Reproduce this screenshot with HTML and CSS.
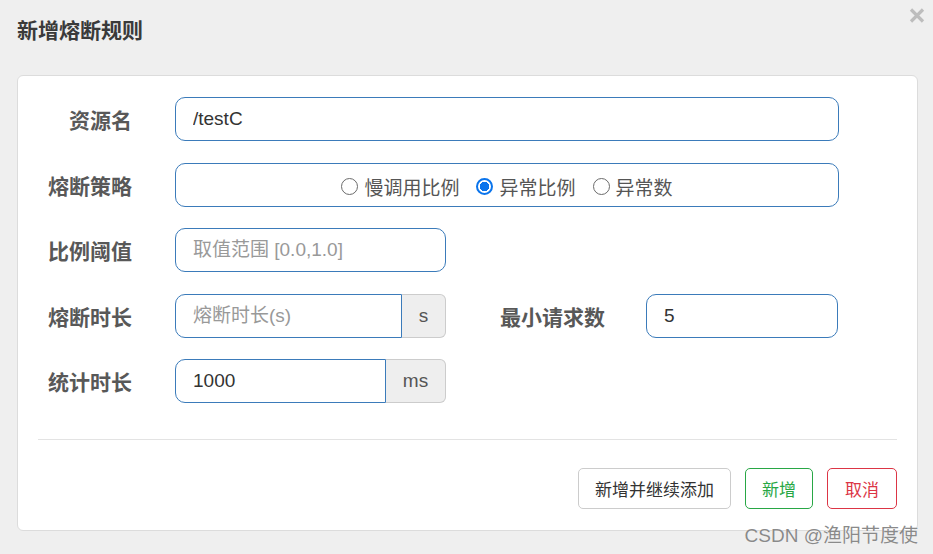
FILE: index.html
```html
<!DOCTYPE html>
<html lang="zh-CN">
<head>
    <meta charset="UTF-8">
    <meta name="viewport" content="width=device-width, initial-scale=1.0">
    <title>新增熔断规则</title>
    <link rel="stylesheet" href="styles.css">
</head>
<body>
    <div class="modal">
        <div class="modal-header">
            <h3>新增熔断规则</h3>
            <span class="close">
                <svg width="16" height="15" viewBox="0 0 16 15"><path d="M2 1.5 L14 13.5 M14 1.5 L2 13.5" stroke="#bdbdbd" stroke-width="3.2"/></svg>
            </span>
        </div>

        <div class="card">
            <div class="form-row">
                <label class="row-label">资源名</label>
                <input type="text" class="field field-wide" value="/testC">
            </div>
            <div class="form-row">
                <label class="row-label">熔断策略</label>
                <div class="field field-wide radios">
                    <label class="radio"><input type="radio" name="grade">慢调用比例</label>
                    <label class="radio"><input type="radio" name="grade" checked>异常比例</label>
                    <label class="radio"><input type="radio" name="grade">异常数</label>
                </div>
            </div>
            <div class="form-row">
                <label class="row-label">比例阈值</label>
                <input type="text" class="field field-mid" placeholder="取值范围 [0.0,1.0]">
            </div>
            <div class="form-row">
                <label class="row-label">熔断时长</label>
                <div class="input-group">
                    <input type="text" class="field group-input w-227" placeholder="熔断时长(s)">
                    <span class="addon w-44">s</span>
                </div>
                <label class="row-label side-label">最小请求数</label>
                <input type="text" class="field field-small" value="5">
            </div>
            <div class="form-row">
                <label class="row-label">统计时长</label>
                <div class="input-group">
                    <input type="text" class="field group-input w-211" value="1000">
                    <span class="addon w-60">ms</span>
                </div>
            </div>

            <hr>

            <div class="actions">
                <button class="btn">新增并继续添加</button>
                <button class="btn btn-success">新增</button>
                <button class="btn btn-danger">取消</button>
            </div>
        </div>
    </div>

    <div class="watermark">CSDN @渔阳节度使</div>
</body>
</html>
```

FILE: styles.css
```css
body {
    margin: 0;
    padding: 0;
    background: #efefef;
    font-family: 'Liberation Sans', 'Noto Sans CJK SC', sans-serif;
    color: #333;
    height: 554px;
    overflow: hidden;
    position: relative;
}

.modal {
    padding: 0 15px 0 17px;
}

.modal-header {
    height: 75px;
    position: relative;
}

.modal-header h3 {
    margin: 0;
    padding-top: 16px;
    font-size: 21px;
    line-height: 29px;
    font-weight: bold;
    color: #3a3a3a;
}

.close {
    position: absolute;
    top: 8px;
    right: -7px;
}

.card {
    background: #fff;
    border: 1px solid #dcdcdc;
    border-radius: 6px;
    padding: 21px 20px 21px 0;
}

.form-row {
    display: flex;
    align-items: center;
    height: 44px;
    margin-bottom: 21.5px;
}

.form-row:last-of-type {
    margin-bottom: 0;
}

.row-label {
    width: 114px;
    margin-right: 43px;
    text-align: right;
    font-size: 21px;
    font-weight: bold;
    color: #585858;
    flex-shrink: 0;
}

.side-label {
    width: auto;
    margin-left: 54px;
    margin-right: 41px;
}

.field {
    box-sizing: border-box;
    height: 44px;
    border: 1px solid #3b7bba;
    border-radius: 10px;
    padding: 0 17px;
    font-family: inherit;
    font-size: 19px;
    color: #333;
    background: #fff;
    outline: none;
}

.field::placeholder {
    color: #999;
}

.field-wide {
    width: 664px;
}

.field-mid {
    width: 271px;
}

.field-small {
    width: 192px;
}

.radios {
    display: flex;
    justify-content: center;
    align-items: center;
    gap: 17px;
    padding: 0;
    color: #555;
}

.radio {
    display: flex;
    align-items: center;
    gap: 6px;
    font-size: 19px;
    padding-top: 4px;
}

.radio input {
    appearance: none;
    box-sizing: border-box;
    flex-shrink: 0;
    margin: 0;
    width: 17px;
    height: 17px;
    border: 1.5px solid #6b6b6b;
    border-radius: 50%;
    background: #fff;
}

.radio input:checked {
    border: 2px solid #0a74ec;
    background: radial-gradient(circle, #0a74ec 0 4.5px, #fff 5px);
}

.input-group {
    display: flex;
    height: 44px;
}

.group-input {
    border-radius: 10px 0 0 10px;
}

.w-227 { width: 227px; }
.w-211 { width: 211px; }

.addon {
    box-sizing: border-box;
    display: flex;
    align-items: center;
    justify-content: center;
    background: #eee;
    border: 1px solid #ccc;
    border-left: none;
    border-radius: 0 6px 6px 0;
    font-size: 19px;
    color: #555;
}

.w-44 { width: 44px; }
.w-60 { width: 60px; }

hr {
    border: none;
    border-top: 1px solid #e3e3e3;
    margin: 36px 0 28px 20px;
}

.actions {
    display: flex;
    justify-content: flex-end;
    gap: 14px;
}

.btn {
    box-sizing: border-box;
    height: 41px;
    padding: 0 16px;
    background: #fff;
    border: 1px solid #ccc;
    border-radius: 5px;
    font-family: inherit;
    font-size: 17px;
    color: #333;
    cursor: pointer;
}

.btn-success {
    border-color: #28a745;
    color: #28a745;
}

.btn-danger {
    padding: 0 17px;
    border-color: #dc3545;
    color: #dc3545;
}

.watermark {
    position: absolute;
    right: 15px;
    bottom: 7px;
    font-size: 19px;
    color: #8a8a8a;
    text-shadow: 0 0 1px #fff;
}
```
